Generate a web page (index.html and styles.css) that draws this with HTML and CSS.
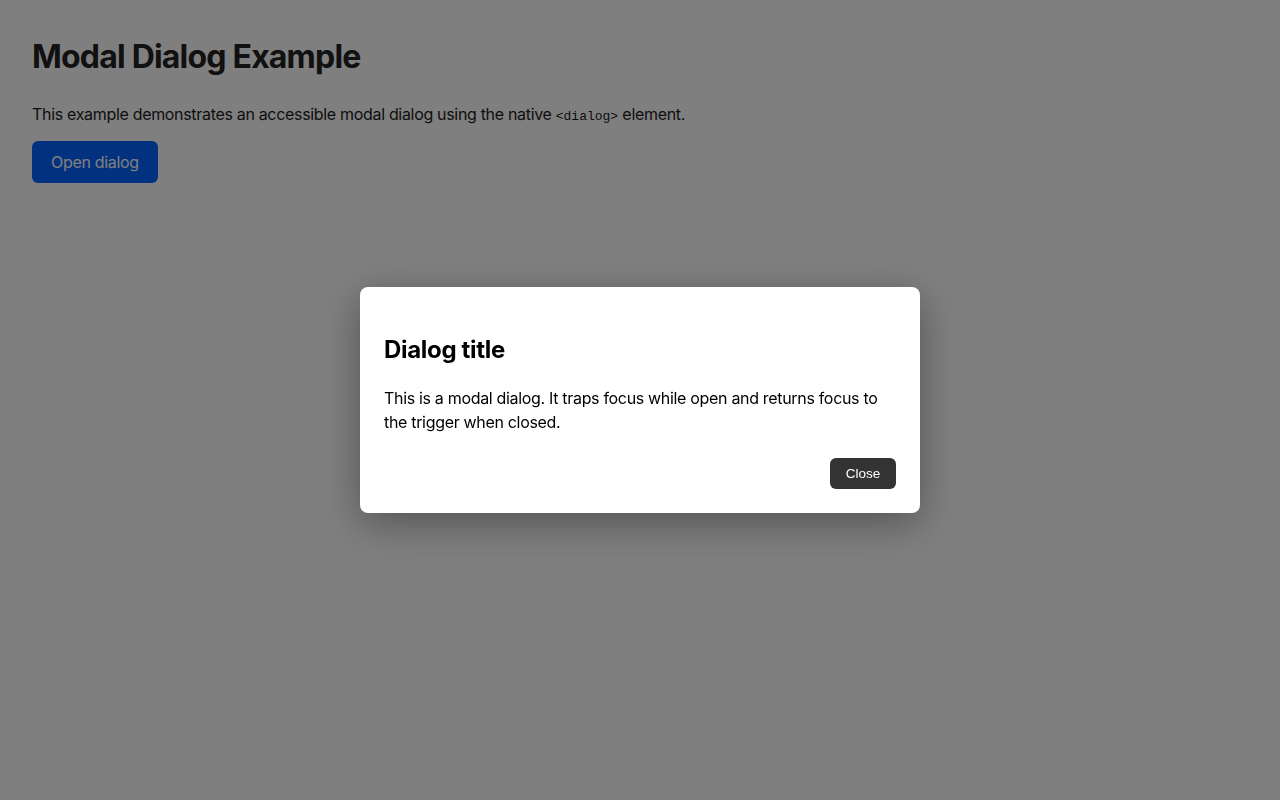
FILE: index.html
```html
<!DOCTYPE html>
<html lang="en">
<head>
    <meta charset="UTF-8">
    <meta name="viewport" content="width=device-width, initial-scale=1.0">
    <title>Modal Dialog Example</title>
    <link rel="stylesheet" href="styles.css">
</head>
<body>
    <main class="page">
        <h1>Modal Dialog Example</h1>
        <p>This example demonstrates an accessible modal dialog using the native <code>&lt;dialog&gt;</code> element.</p>
        <button class="open-btn" type="button">Open dialog</button>
    </main>

    <div class="backdrop">
        <div class="dialog" role="dialog" aria-modal="true" aria-labelledby="dialogTitle">
            <h2 id="dialogTitle">Dialog title</h2>
            <p>This is a modal dialog. It traps focus while open and returns focus to the trigger when closed.</p>
            <div class="dialog-actions">
                <button class="close-btn" type="button">Close</button>
            </div>
        </div>
    </div>
</body>
</html>
```

FILE: styles.css
```css
body, html {
    margin: 0;
    padding: 0;
    font-family: 'Inter', 'Noto Sans', sans-serif;
    letter-spacing: -0.02em;
    background: #ffffff;
    color: #1c1c1c;
}
.page {
    padding: 38px 32px 32px;
}
h1 {
    margin: 0 0 26px;
    font-size: 32px;
    line-height: 1.2;
    letter-spacing: -0.025em;
    color: #222;
}
.page p {
    margin: 0 0 14px;
    font-size: 16px;
    line-height: 1.5;
}
code {
    font-family: 'Liberation Mono', monospace;
    font-size: 13px;
    letter-spacing: 0;
}
.open-btn {
    font-family: inherit;
    letter-spacing: inherit;
    font-size: 16px;
    padding: 10px 19px;
    height: 42px;
    border: none;
    border-radius: 6px;
    background: #0563ff;
    color: #fff;
    cursor: pointer;
}
.backdrop {
    position: fixed;
    inset: 0;
    background: rgba(0, 0, 0, 0.5);
    display: flex;
    align-items: center;
    justify-content: center;
}
.dialog {
    width: 512px;
    padding: 24px;
    background: #fff;
    color: #000;
    border-radius: 8px;
    box-shadow: 0 10px 40px rgba(0, 0, 0, 0.35);
}
.dialog h2 {
    margin: 24px 0 21px;
    font-size: 24px;
    line-height: 1.25;
}
.dialog p {
    margin: 0 0 24px;
    font-size: 16px;
    line-height: 1.5;
}
.dialog-actions {
    display: flex;
    justify-content: flex-end;
}
.close-btn {
    font-family: 'Liberation Sans', Arial, sans-serif;
    letter-spacing: 0;
    font-size: 13.5px;
    font-weight: 500;
    height: 31px;
    width: 66px;
    padding: 0;
    border: none;
    border-radius: 6px;
    background: #333;
    color: #fff;
    cursor: pointer;
}
```
